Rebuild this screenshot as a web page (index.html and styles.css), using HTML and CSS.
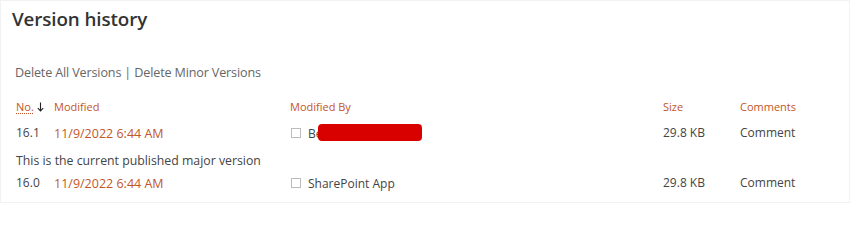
FILE: index.html
```html
<!DOCTYPE html>
<html>
<head>
<meta charset="utf-8">
<link rel="stylesheet" href="styles.css">
</head>
<body>
<div class="panel">
  <h1 class="title">Version history</h1>
  <div class="actions"><span>Delete All Versions</span> | <span>Delete Minor Versions</span></div>
  <div class="grid">
    <div class="hd"><span class="no">No.</span><svg class="arrow" width="7" height="10" viewBox="0 0 7 10"><path d="M3.5 0.5 V9 M0.8 6.2 L3.5 9 L6.2 6.2" fill="none" stroke="#222" stroke-width="1.1"/></svg></div>
    <div class="hd">Modified</div>
    <div class="hd">Modified By</div>
    <div class="hd">Size</div>
    <div class="hd">Comments</div>

    <div class="cell num">16.1</div>
    <div class="cell date">11/9/2022 6:44 AM</div>
    <div class="cell by"><span class="box"></span><span class="name">Be<span class="redact"></span></span></div>
    <div class="cell">29.8 KB</div>
    <div class="cell">Comment</div>

    <div class="note">This is the current published major version</div>

    <div class="cell num">16.0</div>
    <div class="cell date">11/9/2022 6:44 AM</div>
    <div class="cell by"><span class="box"></span><span class="name">SharePoint App</span></div>
    <div class="cell">29.8 KB</div>
    <div class="cell">Comment</div>
  </div>
</div>
</body>
</html>
```
FILE: styles.css
```css
html, body {
  margin: 0;
  padding: 0;
  background: #ffffff;
}
body {
  font-family: "Open Sans", "Noto Sans", sans-serif;
  color: #444444;
}
.panel {
  box-sizing: border-box;
  width: 850px;
  height: 203px;
  margin: 0;
  border: 1px solid #f2f2f2;
  padding: 4px 0 0 0;
}
.title {
  margin: 0 0 0 11px;
  font-size: 18.8px;
  font-weight: 600;
  color: #333333;
  line-height: 28px;
  letter-spacing: -0.1px;
}
.actions {
  margin: 31px 0 0 14px;
  font-size: 12.6px;
  color: #666666;
  line-height: 18px;
  letter-spacing: -0.15px;
}
.grid {
  margin: 17px 0 0 15px;
  display: grid;
  grid-template-columns: 38px 236px 373px 77px auto;
}
.hd {
  font-size: 11px;
  color: #c3562a;
  line-height: 16px;
  height: 18px;
}
.no {
  text-decoration: underline dotted;
  text-underline-offset: 2px;
}
.arrow {
  margin-left: 3px;
  vertical-align: -1px;
}
.cell {
  font-size: 12px;
  line-height: 17px;
  padding: 7px 0 9px 0;
  color: #444444;
}
.num {
  color: #444444;
}
.date {
  color: #c3562a;
  font-size: 12.5px;
  padding-top: 8px;
}
.by {
  display: flex;
  align-items: center;
}
.box {
  display: inline-block;
  width: 8px;
  height: 8px;
  border: 1px solid #bdbdbd;
  margin: 0 7px 0 1px;
}
.name {
  position: relative;
}
.redact {
  position: absolute;
  left: 10px;
  top: -1px;
  width: 104px;
  height: 17px;
  background: #d90000;
  border-radius: 4px;
}
.note {
  grid-column: 1 / -1;
  font-size: 12.3px;
  line-height: 16px;
  padding: 2px 0 0 0;
  margin-bottom: -2px;
  color: #444444;
}
```
